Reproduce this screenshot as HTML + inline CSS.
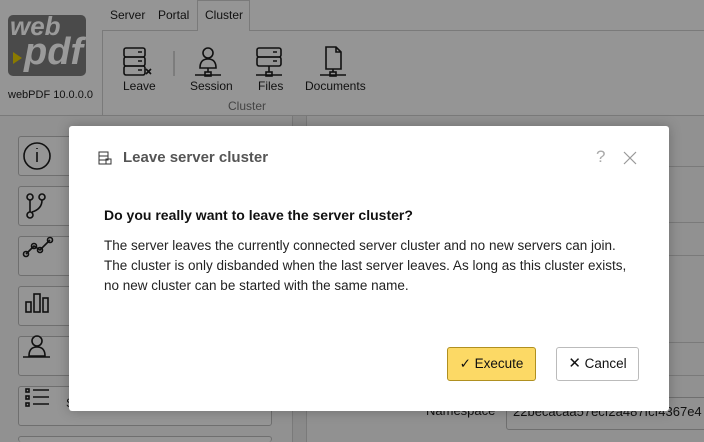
<!DOCTYPE html>
<html><head><style>
*{margin:0;padding:0;box-sizing:border-box}
html{width:704px;height:442px;overflow:hidden}
body{width:704px;height:442px;overflow:hidden;background:#919191;font-family:"Segoe UI","Liberation Sans","DejaVu Sans",sans-serif;position:relative;color:#111}
.abs{position:absolute}
.sb{position:absolute;left:18px;width:254px;height:40px;border:1px solid #6f6f6f;border-radius:3px;background:#959595}
.hl{position:absolute;left:307px;right:0;height:1px;background:#7a7a7a}
</style></head><body>
<div class="abs" style="left:0;top:0;width:704px;height:116px;background:#959595"></div>
<div class="abs" style="left:102px;top:30px;width:602px;height:1px;background:#7a7a7a"></div>
<div class="abs" style="left:102px;top:30px;width:1px;height:86px;background:#7a7a7a"></div>
<div class="abs" style="left:197px;top:0;width:53px;height:31px;background:#959595;border:1px solid #7a7a7a;border-bottom:none"></div>
<div class="abs" style="left:110px;top:8px;font-size:12px">Server</div>
<div class="abs" style="left:158px;top:8px;font-size:12px">Portal</div>
<div class="abs" style="left:205px;top:8px;font-size:12px">Cluster</div>
<div class="abs" style="left:8px;top:15px;width:78px;height:61px;background:#4a4a4a;border-radius:5px;overflow:hidden">
<div class="abs" style="left:2px;top:-4px;font:italic bold 26px 'Liberation Sans',sans-serif;color:#9a9a9a">web</div>
<div class="abs" style="left:16px;top:16px;font:italic bold 38px 'Liberation Sans',sans-serif;color:#9a9a9a">pdf</div>
</div>
<div class="abs" style="left:13px;top:52px;width:0;height:0;border-left:9px solid #8a7a00;border-top:6px solid transparent;border-bottom:6px solid transparent"></div>
<div class="abs" style="left:8px;top:89px;font-size:11px">webPDF 10.0.0.0</div>
<svg class="abs" style="left:110px;top:44px" width="260" height="36" fill="none" stroke="#111" stroke-width="1.6">
<rect x="14" y="4" width="21" height="9" rx="2"/><rect x="14" y="13" width="21" height="9" rx="2"/><rect x="14" y="22" width="21" height="9" rx="2"/>
<path d="M28 8h4M28 17h4M28 26h4M36 25l5 5M41 25l-5 5"/>
<path d="M64 7v25" stroke="#777"/>
<circle cx="98" cy="9" r="5"/><path d="M90 24q0-9 8-9q8 0 8 9zM98 24v4M85 31h26"/><rect x="95" y="28" width="6" height="4"/>
<rect x="147" y="4" width="24" height="9" rx="2"/><rect x="147" y="13" width="24" height="9" rx="2"/><path d="M163 8h4M163 17h4M159 22v6M146 31h26"/><rect x="156" y="28" width="6" height="4"/>
<path d="M216 3h10l5 5v17h-15zM226 3v5h5M223 25v3M210 31h26"/><rect x="220" y="28" width="6" height="4"/>
</svg>
<div class="abs" style="left:123px;top:79px;font-size:12px">Leave</div>
<div class="abs" style="left:190px;top:79px;font-size:12px">Session</div>
<div class="abs" style="left:258px;top:79px;font-size:12px">Files</div>
<div class="abs" style="left:305px;top:79px;font-size:12px">Documents</div>
<div class="abs" style="left:228px;top:99px;font-size:12px;color:#444">Cluster</div>
<div class="abs" style="left:0;top:115px;width:704px;height:1px;background:#7a7a7a"></div>
<div class="abs" style="left:292px;top:116px;width:15px;height:326px;background:#8a8a8a;border-left:1px solid #7a7a7a;border-right:1px solid #7a7a7a"></div>
<div class="sb" style="top:136px"></div><div class="sb" style="top:186px"></div><div class="sb" style="top:236px"></div><div class="sb" style="top:286px"></div><div class="sb" style="top:336px"></div><div class="sb" style="top:386px"></div><div class="sb" style="top:436px;height:6px;border-bottom:none"></div>
<svg class="abs" style="left:18px;top:136px" width="40" height="300" fill="none" stroke="#111" stroke-width="1.6">
<circle cx="19" cy="20" r="13"/><path d="M19 16v10M19 12v1"/>
<circle cx="12" cy="61" r="3"/><circle cx="24" cy="61" r="3"/><circle cx="12" cy="79" r="3"/><path d="M12 64v12M24 64q0 9-10 12"/>
<path d="M8 118l8-8 6 4 10-10"/><circle cx="8" cy="118" r="2.5"/><circle cx="16" cy="110" r="2.5"/><circle cx="22" cy="114" r="2.5"/><circle cx="32" cy="104" r="2.5"/>
<rect x="8" y="166" width="5" height="10"/><rect x="16" y="158" width="6" height="18"/><rect x="25" y="162" width="5" height="14"/>
<circle cx="19" cy="205" r="5"/><path d="M11 220q0-9 8-9q8 0 8 9zM5 221h27"/>
<rect x="8" y="253" width="3" height="3"/><rect x="8" y="260" width="3" height="3"/><rect x="8" y="267" width="3" height="3"/><path d="M15 254h16M15 261h16M15 268h16"/>
</svg>
<div class="abs" style="left:66px;top:396px;font-size:12px">Server logs</div>
<div class="hl" style="top:166px"></div><div class="hl" style="top:222px"></div><div class="hl" style="top:255px"></div><div class="hl" style="top:342px"></div><div class="hl" style="top:375px"></div>
<div class="abs" style="left:426px;top:403px;font-size:13px">Namespace</div>
<div class="abs" style="left:506px;top:397px;width:210px;height:33px;border:1px solid #6f6f6f;border-radius:3px;padding:6px 6px;font-size:13px;white-space:nowrap;overflow:hidden">22becacaa57ecf2a487fcf4367e4</div>
<div class="abs" style="left:69px;top:126px;width:600px;height:285px;background:#fff;border-radius:3px;box-shadow:0 0 12px rgba(0,0,0,.25)"></div>
<svg class="abs" style="left:98px;top:151px" width="14" height="14" fill="none" stroke="#333" stroke-width="1"><rect x="1" y="1" width="9" height="4"/><rect x="1" y="5" width="9" height="4"/><rect x="1" y="9" width="7" height="4"/><rect x="8" y="8" width="5" height="5"/></svg>
<div class="abs" style="left:123px;top:149px;font-size:15px;font-weight:bold;color:#555">Leave server cluster</div>
<div class="abs" style="left:596px;top:147px;font-size:17px;color:#aaa">?</div>
<svg class="abs" style="left:623px;top:151px" width="14" height="14" stroke="#999" stroke-width="1.2"><path d="M1 1l12 12M13 1L1 13"/></svg>
<div class="abs" style="left:104px;top:207px;font-size:14px;font-weight:bold">Do you really want to leave the server cluster?</div>
<div class="abs" style="left:104px;top:236px;font-size:13.5px;line-height:20px;color:#222;width:565px;white-space:nowrap">The server leaves the currently connected server cluster and no new servers can join.<br>The cluster is only disbanded when the last server leaves. As long as this cluster exists,<br>no new cluster can be started with the same name.</div>
<div class="abs" style="left:447px;top:347px;width:89px;height:34px;background:#fcd965;border:1px solid #b09020;border-radius:3px;font-size:13.5px;text-align:center;line-height:32px">✓ Execute</div>
<div class="abs" style="left:556px;top:347px;width:83px;height:34px;background:#fff;border:1px solid #bbb;border-radius:3px;font-size:13.5px;text-align:center;line-height:32px"><span style="font-size:15px;font-weight:300">✕</span> Cancel</div>
</body></html>
